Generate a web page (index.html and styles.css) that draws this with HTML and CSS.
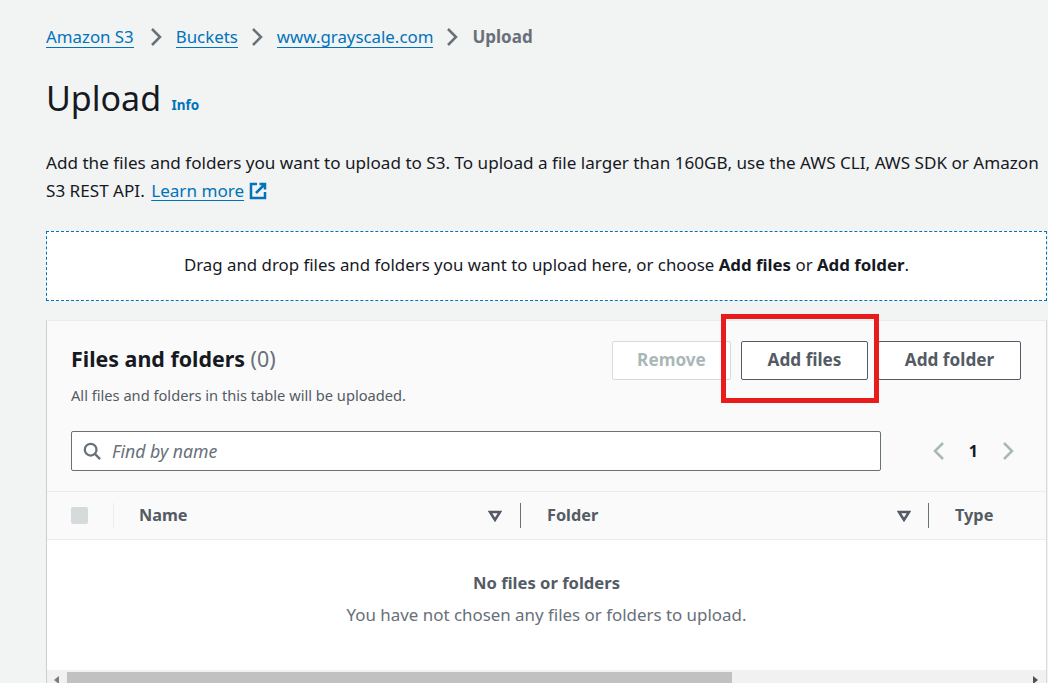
FILE: index.html
```html
<!DOCTYPE html>
<html lang="en">
<head>
<meta charset="utf-8">
<title>Upload</title>
<link rel="stylesheet" href="styles.css">
</head>
<body>
<main class="page">
  <nav class="crumbs">
    <a class="link link-first" href="#">Amazon S3</a>
    <svg class="chev" viewBox="0 0 12 20"><path d="M2 2l8 8-8 8"/></svg>
    <a class="link" href="#">Buckets</a>
    <svg class="chev" viewBox="0 0 12 20"><path d="M2 2l8 8-8 8"/></svg>
    <a class="link" href="#">www.grayscale.com</a>
    <svg class="chev" viewBox="0 0 12 20"><path d="M2 2l8 8-8 8"/></svg>
    <span class="current">Upload</span>
  </nav>
  <header class="title-row">
    <h1 class="title">Upload</h1>
    <a class="info" href="#">Info</a>
  </header>
  <p class="desc">Add the files and folders you want to upload to S3. To upload a file larger than 160GB, use the AWS CLI, AWS SDK or Amazon S3 REST API. <a class="link" href="#">Learn more</a><svg class="ext" viewBox="0 0 18 18"><path d="M8 2H2v14h14v-6"/><path d="M7 11l9-9M10.500 2H16v5.500"/></svg></p>
  <div class="drop">Drag and drop files and folders you want to upload here, or choose&nbsp;<b>Add files</b>&nbsp;or&nbsp;<b>Add folder</b>.</div>
  <section class="panel">
    <div class="panel-head">
      <div class="head-top">
        <div class="head-text">
          <h2 class="panel-title">Files and folders <span class="count">(0)</span></h2>
          <p class="panel-sub">All files and folders in this table will be uploaded.</p>
        </div>
        <div class="actions">
          <button class="btn btn-off">Remove</button>
          <button class="btn">Add files</button>
          <button class="btn">Add folder</button>
        </div>
      </div>
      <div class="tools">
        <div class="search">
          <svg class="mag" viewBox="0 0 20 20"><circle cx="8.500" cy="8.500" r="6.500"/><path d="M13.500 13.500L19 19"/></svg>
          <span class="ph">Find by name</span>
        </div>
        <div class="pager">
          <svg class="pg" viewBox="0 0 12 20"><path d="M10 2l-8 8 8 8"/></svg>
          <span class="num">1</span>
          <svg class="pg" viewBox="0 0 12 20"><path d="M2 2l8 8-8 8"/></svg>
        </div>
      </div>
    </div>
    <div class="thead">
      <div class="cell-check"><span class="check"></span></div>
      <div class="col col-name"><span class="col-label">Name</span><svg class="sort" viewBox="0 0 14 12"><path d="M2 2h10L7 10z"/></svg></div>
      <div class="col col-folder"><span class="col-label">Folder</span><svg class="sort" viewBox="0 0 14 12"><path d="M2 2h10L7 10z"/></svg></div>
      <div class="col-type"><span class="col-label">Type</span></div>
    </div>
    <div class="empty">
      <strong class="empty-title">No files or folders</strong>
      <p class="empty-sub">You have not chosen any files or folders to upload.</p>
    </div>
    <div class="scrollbar">
      <span class="arrow-l"></span>
      <span class="thumb"></span>
      <span class="arrow-r"></span>
    </div>
  </section>
  <div class="highlight"></div>
</main>
</body>
</html>
```
FILE: styles.css
```css
* { box-sizing: border-box; }
html, body { margin: 0; height: 100%; overflow: hidden; }
body {
  background: #f2f3f3;
  color: #16191f;
  font-family: "Noto Sans", "Open Sans", sans-serif;
  font-size: 16px;
}
.page { position: relative; height: 683px; padding: 25px 1px 0 46px; overflow: hidden; }
.link { color: #0073bb; text-decoration: none; border-bottom: 1px solid #0073bb; }
.crumbs { display: flex; align-items: center; height: 24px; line-height: 20px; font-size: 16.850px; }
.crumbs .link { line-height: 20px; }
.crumbs .link-first { margin-right: 3px; }
.chev { width: 12px; height: 20px; margin: 0 14px 0 13px; fill: none; stroke: #687078; stroke-width: 2.500; }
.current { color: #687078; font-weight: 700; font-size: 17px; }
.title-row { display: flex; align-items: baseline; margin-top: 26px; height: 46px; }
.title { margin: 0; font-size: 34px; font-weight: 400; line-height: 46px; }
.info { margin-left: 10.500px; color: #0073bb; font-size: 13.500px; font-weight: 700; text-decoration: none; position: relative; top: -1px; }
.desc { margin: 28px 0 0; width: 1000px; font-size: 17.100px; line-height: 28px; }
.ext { width: 18px; height: 18px; margin-left: 5px; vertical-align: -3px; fill: none; stroke: #0073bb; stroke-width: 2.500; }
.desc .link { margin-left: 2px; border-bottom: 0; text-decoration: underline; text-underline-offset: 3px; text-decoration-thickness: 1px; }
.drop {
  display: flex; justify-content: center; align-items: center;
  height: 70px; margin-top: 26px; padding-bottom: 4px;
  background: #fff; border: 1px dashed #0073bb;
  font-size: 16.850px; color: #16191f;
}
.panel { margin-top: 19px; background: #fff; border-left: 1px solid #c9ced1; border-right: 1px solid #d5dbdb; border-top: 1px solid #eaeded; }
.panel-head { height: 170px; padding: 0 25px 0 24px; background: #fafafa; }
.head-top { display: flex; justify-content: space-between; height: 110px; }
.head-text { padding-top: 23px; }
.panel-title { margin: 0; font-size: 21.400px; font-weight: 700; line-height: 30px; }
.count { color: #687078; font-weight: 400; }
.panel-sub { margin: 11px 0 0; color: #545b64; font-size: 14.650px; line-height: 20px; }
.actions { display: flex; gap: 10px; padding-top: 20px; }
.btn {
  height: 39px; padding: 0 0 2px; background: #fff; border: 1px solid #545b64; border-radius: 2px;
  color: #545b64; font: 700 17.200px "Noto Sans", sans-serif;
  width: 127px;
}
.actions .btn:last-child { width: 143px; }
.btn-off { width: 119px; border-color: #d5dbdb; color: #aab7b8; }
.tools { display: flex; justify-content: space-between; align-items: center; }
.search { display: flex; align-items: center; width: 810px; height: 40px; padding-left: 11px; background: #fff; border: 1px solid #687078; border-radius: 2px; }
.mag { width: 18px; height: 18px; fill: none; stroke: #687078; stroke-width: 2.500; }
.ph { margin-left: 11px; margin-bottom: 1px; color: #687078; font-style: italic; font-size: 17.700px; }
.pager { display: flex; align-items: center; gap: 24px; padding-right: 7px; }
.pg { width: 12px; height: 20px; fill: none; stroke: #aab7b8; stroke-width: 2.500; }
.num { font-size: 16px; font-weight: 700; }
.thead { display: flex; align-items: center; height: 49px; background: #fafafa; border-top: 1px solid #eaeded; border-bottom: 1px solid #eaeded; color: #545b64; font-weight: 700; font-size: 16.300px; }
.col-label { display: block; margin-bottom: 2px; }
.cell-check { display: flex; align-items: center; width: 67px; height: 25px; padding-left: 24px; border-right: 1px solid #eaeded; }
.check { width: 17px; height: 17px; background: #d5dbdb; border-radius: 2px; }
.col { display: flex; align-items: center; justify-content: space-between; height: 25px; }
.col-name { width: 407px; padding: 0 18px 0 25px; border-right: 1px solid #687078; }
.col-folder { width: 408px; padding: 0 17px 0 26px; border-right: 1px solid #687078; }
.col-type { padding-left: 26px; }
.sort { width: 14px; height: 12px; fill: none; stroke: #545b64; stroke-width: 2.500; }
.empty { height: 130px; padding-top: 30px; text-align: center; }
.empty-title { display: block; color: #545b64; font-size: 16.600px; line-height: 26px; }
.empty-sub { margin: 6px 0 0; color: #687078; font-size: 16.900px; line-height: 26px; }
.scrollbar { display: flex; align-items: center; height: 17px; padding-top: 2px; background: #f1f1f1; }
.arrow-l { width: 0; height: 0; margin-left: 7px; border: 4px solid transparent; border-left: 0; border-right: 5px solid #7a7a7a; }
.thumb { width: 665px; height: 15px; margin-left: 8px; background: #c1c1c1; }
.arrow-r { width: 0; height: 0; margin-left: auto; margin-right: 8px; border: 4px solid transparent; border-right: 0; border-left: 5px solid #505050; }
.highlight { position: absolute; left: 721px; top: 314px; width: 158px; height: 89px; border: 5px solid #e81c1c; }
```
